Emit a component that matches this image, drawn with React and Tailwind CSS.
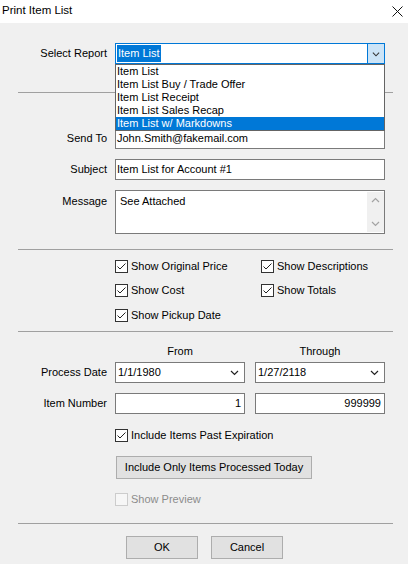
import React from 'react';

const font = "font-['Liberation_Sans',Arial,sans-serif]";

const Check = ({ checked = true, disabled = false, label }) => (
  <div className="flex items-center h-[16px]">
    <span
      className={`w-[13px] h-[13px] border flex items-center justify-center ${
        disabled ? 'border-[#cccccc] bg-[#f6f6f6]' : 'border-[#333333] bg-white'
      }`}
    >
      {checked && (
        <svg width="11" height="11" viewBox="0 0 11 11">
          <path d="M1.5 5.5 L4 8 L9.5 2.5" fill="none" stroke="#222" strokeWidth="1" />
        </svg>
      )}
    </span>
    <span className={`ml-[3px] ${disabled ? 'text-[#8c8c8c]' : 'text-black'}`}>{label}</span>
  </div>
);

const Chevron = ({ up = false, color = '#222', size = 9 }) => (
  <svg width={size} height={size} viewBox="0 0 9 9">
    <path
      d={up ? 'M1 6 L4.5 2.5 L8 6' : 'M1 3 L4.5 6.5 L8 3'}
      fill="none"
      stroke={color}
      strokeWidth="1.2"
    />
  </svg>
);

const Row = ({ label, children, className = '', align = 'items-center', labelClass = '' }) => (
  <div className={`flex ${align} ${className}`}>
    <div className={`w-[89px] text-right shrink-0 ${labelClass}`}>{label}</div>
    <div className="ml-[8px] w-[270px]">{children}</div>
  </div>
);

const Box = ({ children, className = '' }) => (
  <div className={`h-[21px] border border-[#7a7a7a] bg-white flex items-center ${className}`}>
    {children}
  </div>
);

const Sep = ({ className = '' }) => <div className={`h-px bg-[#a0a0a0] ${className}`} />;

const reports = [
  'Item List',
  'Item List Buy / Trade Offer',
  'Item List Receipt',
  'Item List Sales Recap',
  'Item List w/ Markdowns',
];

export default function App() {
  return (
    <div className={`w-[408px] h-[564px] bg-[#f0f0f0] text-[11px] text-black ${font} overflow-hidden`}>
      {/* Title bar */}
      <div className="h-[23px] bg-white flex items-center justify-between pl-[2px] pr-[5px]">
        <span className="text-[11.5px] -mt-[2px]">Print Item List</span>
        <svg width="11" height="11" viewBox="0 0 11 11" className="-mt-[1px]">
          <path d="M0.5 0.5 L10.5 10.5 M10.5 0.5 L0.5 10.5" stroke="#111" strokeWidth="1" />
        </svg>
      </div>

      <div className="pl-[18px] pr-[15px] pt-[20px]">
        {/* Select report */}
        <Row label="Select Report">
          <div className="relative">
            <div className="h-[21px] border border-[#0078d7] bg-white flex items-center">
              <span className="ml-px bg-[#0078d7] text-white px-px h-[17px] flex items-center">Item List</span>
              <div className="ml-auto h-full w-[17px] bg-[#cce4f7] border-l border-[#0078d7] flex items-center justify-center">
                <Chevron color="#333" size={8} />
              </div>
            </div>
            <div className="absolute left-0 top-full w-full z-10 border border-[#646464] bg-white">
              {reports.map((r) => (
                <div
                  key={r}
                  className={`h-[13px] leading-[13px] pl-px ${
                    r === 'Item List w/ Markdowns' ? 'bg-[#0078d7] text-white' : ''
                  }`}
                >
                  {r}
                </div>
              ))}
            </div>
          </div>
        </Row>

        <Sep className="mt-[28px]" />

        <Row label="Send To" className="mt-[35px]">
          <Box>
            <span className="pl-px">John.Smith@fakemail.com</span>
          </Box>
        </Row>

        <Row label="Subject" className="mt-[10px]">
          <Box>
            <span className="pl-px">Item List for Account #1</span>
          </Box>
        </Row>

        <Row label="Message" className="mt-[10px]" align="items-start" labelClass="pt-[3px]">
          <div className="h-[44px] border border-[#7a7a7a] bg-white flex">
            <span className="pl-[4px] pt-[2px]">See Attached</span>
            <div className="ml-auto my-px w-[17px] bg-[#f0f0f0] flex flex-col items-center justify-between py-[4px]">
              <Chevron up color="#a3a3a3" />
              <Chevron color="#a3a3a3" />
            </div>
          </div>
        </Row>

        <Sep className="mt-[15px]" />

        {/* Options */}
        <div className="ml-[97px] grid grid-cols-[146px_1fr] mt-[8px] gap-y-[8px]">
          <Check label="Show Original Price" />
          <Check label="Show Descriptions" />
          <Check label="Show Cost" />
          <Check label="Show Totals" />
        </div>
        <div className="ml-[97px] mt-[9px]">
          <Check label="Show Pickup Date" />
        </div>

        <Sep className="mt-[8px]" />

        {/* Ranges */}
        <div className="ml-[97px] w-[270px] grid grid-cols-2 gap-x-[10px] mt-[12px] h-[14px] leading-[14px]">
          <div className="text-center">From</div>
          <div className="text-center">Through</div>
        </div>

        <Row label="Process Date" className="mt-[4px]">
          <div className="grid grid-cols-2 gap-x-[10px]">
            <Box>
              <span className="pl-[2px]">1/1/1980</span>
              <span className="ml-auto mr-[5px] flex"><Chevron /></span>
            </Box>
            <Box>
              <span className="pl-[2px]">1/27/2118</span>
              <span className="ml-auto mr-[5px] flex"><Chevron /></span>
            </Box>
          </div>
        </Row>

        <Row label="Item Number" className="mt-[10px]">
          <div className="grid grid-cols-2 gap-x-[10px]">
            <Box className="justify-end pr-[3px]">1</Box>
            <Box className="justify-end pr-[3px]">999999</Box>
          </div>
        </Row>

        <div className="ml-[97px] mt-[13px]">
          <Check label="Include Items Past Expiration" />
        </div>

        <div className="ml-[98px] mt-[13px]">
          <button className="h-[23px] w-[196px] bg-[#e1e1e1] border border-[#adadad] text-center">
            Include Only Items Processed Today
          </button>
        </div>

        <div className="ml-[97px] mt-[12px]">
          <Check checked={false} disabled label="Show Preview" />
        </div>

        <Sep className="mt-[16px]" />

        <div className="flex justify-center gap-x-[13px] mt-[12px] pr-[2px]">
          <button className="h-[23px] w-[72px] bg-[#e1e1e1] border border-[#adadad]">OK</button>
          <button className="h-[23px] w-[72px] bg-[#e1e1e1] border border-[#adadad]">Cancel</button>
        </div>
      </div>
    </div>
  );
}
